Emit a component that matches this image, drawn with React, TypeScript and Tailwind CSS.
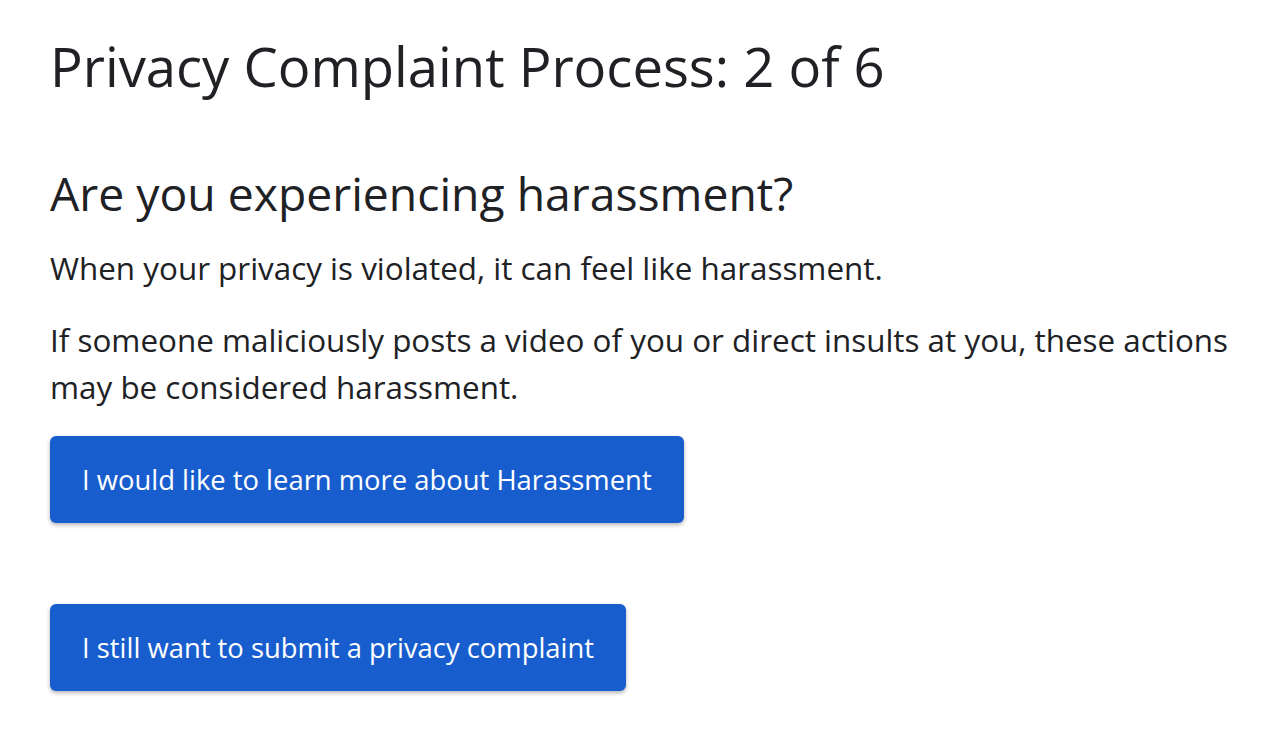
export default function App() {
  const font = { fontFamily: "'Open Sans', Roboto, sans-serif" };
  return (
    <div className="min-h-screen bg-white text-[#202124]" style={font}>
      <div className="pl-[50px] pr-[18px] pt-[30px]">
        <h1 className="text-[54.4px] leading-[72px] font-normal">
          Privacy Complaint Process: 2 of 6
        </h1>

        <h2 className="mt-[64px] text-[46.3px] leading-[56px] font-normal">
          Are you experiencing harassment?
        </h2>

        <p className="mt-[22px] text-[31.4px] leading-[47px]">
          When your privacy is violated, it can feel like harassment.
        </p>
        <p className="mt-[25px] text-[31.4px] leading-[47px]">
          If someone maliciously posts a video of you or direct insults at you, these actions
          may be considered harassment.
        </p>

        <div className="mt-[26px] flex flex-col items-start gap-[81px]">
          <button className="h-[87px] px-[32px] rounded-[6px] bg-[#185dce] text-white text-[27.4px] font-medium shadow-[0_2px_4px_rgba(0,0,0,0.3)]">
            I would like to learn more about Harassment
          </button>
          <button className="h-[87px] px-[32px] rounded-[6px] bg-[#185dce] text-white text-[27.4px] font-medium shadow-[0_2px_4px_rgba(0,0,0,0.3)]">
            I still want to submit a privacy complaint
          </button>
        </div>
      </div>
    </div>
  );
}
